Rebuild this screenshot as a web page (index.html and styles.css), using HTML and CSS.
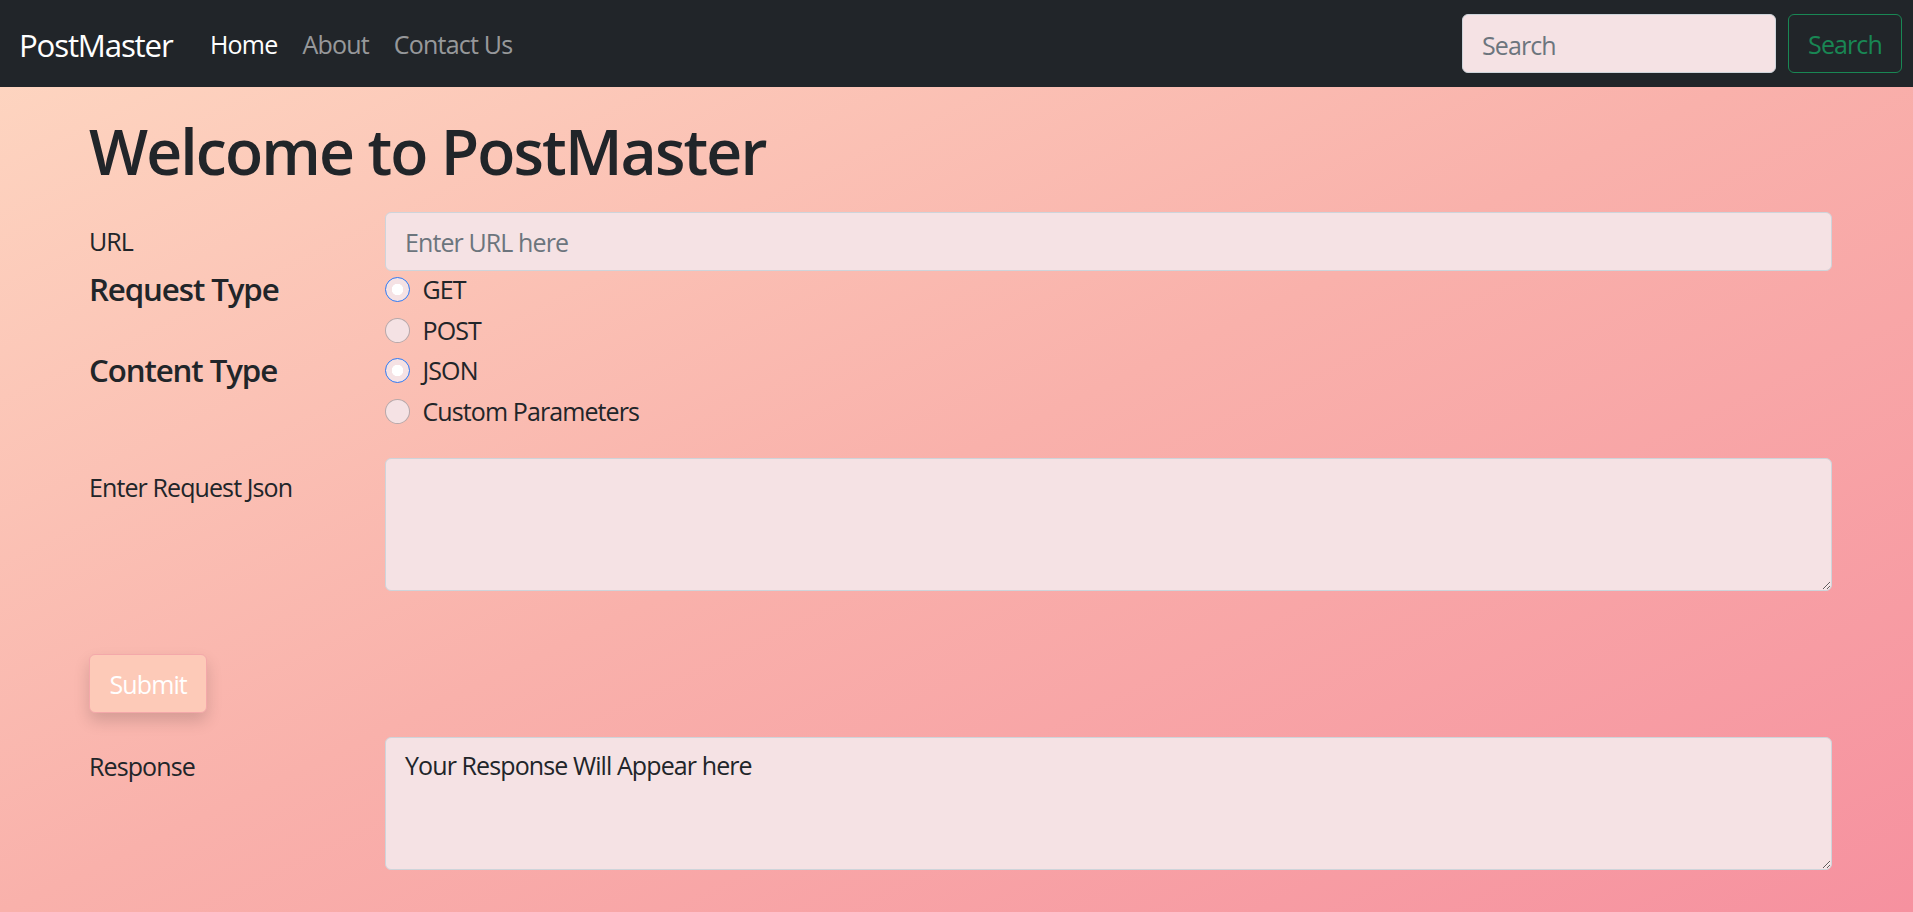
FILE: index.html
```html
<!DOCTYPE html>
<html lang="en">
<head>
<meta charset="utf-8">
<title>PostMaster</title>
<link rel="stylesheet" href="styles.css">
</head>
<body>
<nav class="navbar">
  <a class="brand" href="#">PostMaster</a>
  <ul class="nav-links">
    <li><a class="nav-link active" href="#">Home</a></li>
    <li><a class="nav-link" href="#">About</a></li>
    <li><a class="nav-link" href="#">Contact Us</a></li>
  </ul>
  <form class="search">
    <input class="search-input" type="search" placeholder="Search">
    <button class="btn-search" type="button">Search</button>
  </form>
</nav>

<main class="container">
  <h1 class="title">Welcome to PostMaster</h1>
  <form class="req-form">
    <div class="form-row">
      <label class="row-label" for="url">URL</label>
      <input class="field" id="url" type="text" placeholder="Enter URL here">
    </div>

    <div class="form-row">
      <div class="row-legend">Request Type</div>
      <div class="checks">
        <label class="check"><input class="radio" type="radio" name="req" checked><span>GET</span></label>
        <label class="check"><input class="radio" type="radio" name="req"><span>POST</span></label>
      </div>
    </div>

    <div class="form-row">
      <div class="row-legend">Content Type</div>
      <div class="checks">
        <label class="check"><input class="radio" type="radio" name="ctype" checked><span>JSON</span></label>
        <label class="check"><input class="radio" type="radio" name="ctype"><span>Custom Parameters</span></label>
      </div>
    </div>

    <div class="form-row gap-top">
      <label class="row-label" for="json">Enter Request Json</label>
      <textarea class="field area" id="json" rows="3"></textarea>
    </div>

    <div class="submit-row">
      <button class="btn-submit" type="button">Submit</button>
    </div>

    <div class="form-row response-row">
      <label class="row-label" for="resp">Response</label>
      <textarea class="field area" id="resp" rows="3">Your Response Will Appear here</textarea>
    </div>
  </form>
</main>
</body>
</html>
```

FILE: styles.css
```css
* {
  box-sizing: border-box;
}

html, body {
  margin: 0;
  padding: 0;
}

body {
  min-height: 100vh;
  font-family: "Open Sans", "Noto Sans", sans-serif;
  font-size: 25px;
  line-height: 1.5;
  letter-spacing: -0.9px;
  color: #212529;
  background: linear-gradient(to bottom right, #fed8c2 0%, #f9b1ab 50%, #f6919f 100%);
}

input, textarea, button {
  letter-spacing: inherit;
}

/* ---------- navbar ---------- */
.navbar {
  display: flex;
  align-items: center;
  height: 87px;
  padding: 0 11px 0 19px;
  background: #212529;
}

.brand {
  font-size: 31.25px;
  line-height: 1.5;
  letter-spacing: -1.2px;
  color: #fff;
  text-decoration: none;
  margin-right: 25px;
  padding-top: 4px;
}

.nav-links {
  display: flex;
  list-style: none;
  margin: 0;
  padding: 0;
  flex: 1;
}

.nav-link {
  display: block;
  padding: 2px 12.5px 0;
  letter-spacing: -0.8px;
  color: rgba(255, 255, 255, 0.55);
  text-decoration: none;
}

.nav-link.active {
  color: #fff;
}

.search {
  display: flex;
  gap: 12px;
}

.search-input {
  width: 314px;
  height: 59px;
  padding: 2px 19px 0;
  font: inherit;
  color: #212529;
  background: #f5e2e4;
  border: 1px solid #ced4da;
  border-radius: 6px;
}

.search-input::placeholder,
.field::placeholder {
  color: #6c757d;
}

.btn-search {
  width: 114px;
  height: 59px;
  padding: 2px 0 0;
  font: inherit;
  color: #198754;
  background: transparent;
  border: 1px solid #198754;
  border-radius: 6px;
}

/* ---------- main ---------- */
.container {
  width: 1743px;
  margin: 0 81px 0 89px;
  padding-bottom: 40px;
}

.title {
  margin: 26px 0 24px;
  font-size: 62.5px;
  font-weight: 600;
  line-height: 1.2;
  letter-spacing: -1.9px;
}

.form-row {
  display: grid;
  grid-template-columns: 260px 1fr;
  column-gap: 36px;
}

.row-label {
  padding-top: 11px;
}

.row-legend {
  font-size: 31.25px;
  font-weight: 600;
  line-height: 1.2;
  letter-spacing: -1.1px;
}

.field {
  width: 100%;
  height: 59px;
  padding: 9px 19px;
  font: inherit;
  color: #212529;
  background: #f5e2e4;
  border: 1px solid #ced4da;
  border-radius: 6px;
}

.area {
  height: 133px;
  display: block;
}

.checks {
  display: flex;
  flex-direction: column;
}

.check {
  display: flex;
  align-items: flex-start;
  min-height: 37.5px;
  margin-bottom: 3.1px;
}

.radio {
  appearance: none;
  -webkit-appearance: none;
  width: 25px;
  height: 25px;
  margin: 6.25px 12.5px 0 0;
  border: 1px solid rgba(0, 0, 0, 0.25);
  border-radius: 50%;
  background: #f5e2e4;
  flex: none;
}

.radio:checked {
  border: 1.5px solid #2f7bf5;
  background: radial-gradient(circle, #fff 0 5.5px, #f5e2e4 6px);
}

.gap-top {
  margin-top: 24.5px;
}

.submit-row {
  margin-top: 63px;
}

.btn-submit {
  height: 59px;
  padding: 2px 19.5px 0;
  font: inherit;
  color: #fff;
  background: #fdcab8;
  border: 1px solid #f4a8aa;
  border-radius: 6px;
  box-shadow: 0 8px 16px rgba(0, 0, 0, 0.15);
}

.response-row {
  margin-top: 24px;
}
```
